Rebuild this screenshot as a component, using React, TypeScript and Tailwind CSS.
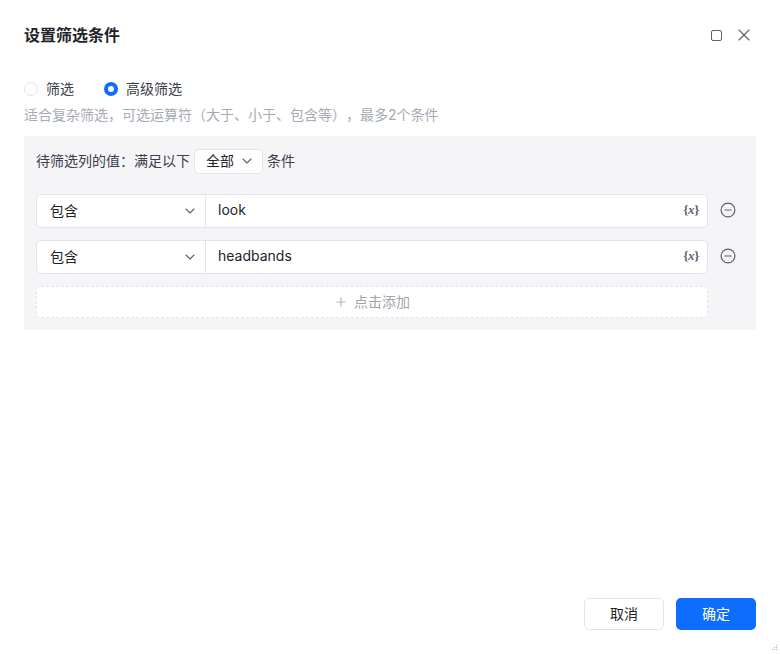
import { ChevronDown, Plus, X } from 'lucide-react';

const FONT = "font-['Inter','Noto_Sans_CJK_SC',sans-serif]";

const MinusCircle = () => (
  <svg width="16" height="16" viewBox="0 0 16 16" fill="none" stroke="currentColor" strokeWidth="1.2">
    <circle cx="8" cy="8" r="6.9" />
    <path d="M4.8 8h6.4" strokeLinecap="round" />
  </svg>
);

const ConditionRow = ({ value }: { value: string }) => {
  return (
    <div className="flex items-center h-[34px] mb-3">
      <div className="flex w-[672px] h-full bg-white border border-[#e4e5ea] rounded-[5px]">
        <div className="flex items-center justify-between w-[169px] h-full pl-[13px] pr-[7px] border-r border-[#e4e5ea] text-sm text-[#1f2329]">
          <span>包含</span>
          <ChevronDown size={16} strokeWidth={1.6} className="text-[#5c6270]" />
        </div>
        <div className="flex flex-1 items-center justify-between pl-3 pr-[8px] pb-[2px] text-sm text-[#1f2329]">
          <span>{value}</span>
          <span className="font-['Liberation_Serif',serif] font-bold text-[13px] tracking-[-0.3px] text-[#5c6270]">
            {'{'}
            <i>x</i>
            {'}'}
          </span>
        </div>
      </div>
      <div className="flex justify-center w-[36px] pl-[4px] pb-[2px] text-[#5c6270]">
        <MinusCircle />
      </div>
    </div>
  );
};

export default function App() {
  return (
    <div className={`${FONT} relative flex flex-col w-[780px] h-[654px] bg-white px-6 overflow-hidden`}>
      <header className="flex items-center justify-between h-[70px]">
        <h1 className="text-base font-semibold text-[#1f2329]">设置筛选条件</h1>
        <div className="flex items-center gap-[12px] pr-[2px]">
          <span className="w-[11px] h-[11px] border-[1.5px] border-[#5c6270] rounded-[2px]" />
          <X size={20} strokeWidth={1.4} className="text-[#5c6270]" />
        </div>
      </header>

      <div className="flex items-center h-[18px] mt-[10px] text-sm text-[#3b4049]">
        <span className="w-[14px] h-[14px] rounded-full border border-[#e4e5ea] bg-white mr-2" />
        <span className="mr-[30px]">筛选</span>
        <span className="flex items-center justify-center w-[14px] h-[14px] rounded-full bg-[#0d6efd] mr-2">
          <span className="w-[6px] h-[6px] rounded-full bg-white" />
        </span>
        <span>高级筛选</span>
      </div>
      <p className="mt-[8px] text-sm leading-[18px] text-[#a6abb5] [text-spacing-trim:space-all]">适合复杂筛选，可选运算符（大于、小于、包含等），最多2个条件</p>

      <section className="mt-[12px] h-[194px] bg-[#f5f5f8] px-3 pt-3">
        <div className="flex items-center h-[26px] mb-[20px] text-sm text-[#3b4049]">
          <span>待筛选列的值：满足以下</span>
          <div className="flex items-center justify-between w-[69px] h-[25px] mx-[4px] pl-[11px] pr-[7px] bg-white border border-[#e4e5ea] rounded-[5px] text-[#1f2329]">
            <span>全部</span>
            <ChevronDown size={16} strokeWidth={1.6} className="text-[#5c6270]" />
          </div>
          <span>条件</span>
        </div>
        <ConditionRow value="look" />
        <ConditionRow value="headbands" />
        <div className="flex items-center justify-center gap-[6px] w-[672px] h-[32px] bg-white border border-dashed border-[#e4e5ea] rounded-[5px] text-sm text-[#a0a4ad]">
          <Plus size={14} className="text-[#b0b4bd]" />
          <span>点击添加</span>
        </div>
      </section>

      <footer className="flex justify-end gap-3 mt-[268px]">
        <button className="w-[80px] h-[32px] bg-white border border-[#e4e5ea] rounded-[5px] text-sm text-[#1f2329]">取消</button>
        <button className="w-[80px] h-[32px] bg-[#0d6efd] rounded-[5px] text-sm text-white">确定</button>
      </footer>

      <svg className="absolute right-[2px] bottom-[2px]" width="8" height="8" viewBox="0 0 8 8" fill="#a6abb5">
        <rect x="6" y="1" width="1" height="1" />
        <rect x="4" y="3" width="1" height="1" />
        <rect x="6" y="3" width="1" height="1" />
        <rect x="2" y="5" width="1" height="1" />
        <rect x="4" y="5" width="1" height="1" />
        <rect x="6" y="5" width="1" height="1" />
      </svg>
    </div>
  );
}
